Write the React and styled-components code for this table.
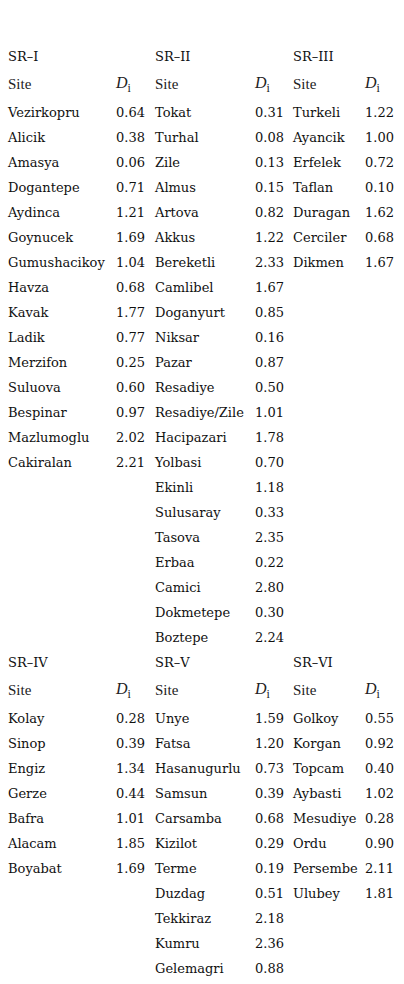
import React from 'react';
import styled, { createGlobalStyle } from 'styled-components';

const GlobalStyle = createGlobalStyle`
  html, body {
    margin: 0;
    padding: 0;
    background: #ffffff;
  }
  body {
    font-family: "DejaVu Serif", serif;
    color: #111;
  }
`;

const Page = styled.div`
  width: 404px;
  padding: 44px 0 0 0;
  box-sizing: border-box;
`;

const Block = styled.div`
  display: grid;
  grid-template-columns: 108px 39px 100px 38px 72px 39px;
  grid-template-rows: 25px 31px;
  grid-auto-rows: 25px;
  padding-left: 8px;
`;

const Cell = styled.div`
  display: flex;
  align-items: center;
  font-size: 13px;
  white-space: nowrap;
  grid-column: ${props => (props.span ? `span ${props.span}` : 'auto')};
`;

const HeadCell = styled(Cell)`
  font-family: "Liberation Serif", serif;
  font-size: 15px;
  color: #222;
`;

const Di = styled.span`
  font-family: "Liberation Serif", serif;
  font-style: italic;
  font-size: 16px;
  sub {
    font-style: normal;
    font-size: 12px;
    vertical-align: -4px;
  }
`;

const groups = [
  {
    titles: ['SR–I', 'SR–II', 'SR–III'],
    cols: [
      [
        ['Vezirkopru', '0.64'], ['Alicik', '0.38'], ['Amasya', '0.06'], ['Dogantepe', '0.71'],
        ['Aydinca', '1.21'], ['Goynucek', '1.69'], ['Gumushacikoy', '1.04'], ['Havza', '0.68'],
        ['Kavak', '1.77'], ['Ladik', '0.77'], ['Merzifon', '0.25'], ['Suluova', '0.60'],
        ['Bespinar', '0.97'], ['Mazlumoglu', '2.02'], ['Cakiralan', '2.21'],
      ],
      [
        ['Tokat', '0.31'], ['Turhal', '0.08'], ['Zile', '0.13'], ['Almus', '0.15'],
        ['Artova', '0.82'], ['Akkus', '1.22'], ['Bereketli', '2.33'], ['Camlibel', '1.67'],
        ['Doganyurt', '0.85'], ['Niksar', '0.16'], ['Pazar', '0.87'], ['Resadiye', '0.50'],
        ['Resadiye/Zile', '1.01'], ['Hacipazari', '1.78'], ['Yolbasi', '0.70'], ['Ekinli', '1.18'],
        ['Sulusaray', '0.33'], ['Tasova', '2.35'], ['Erbaa', '0.22'], ['Camici', '2.80'],
        ['Dokmetepe', '0.30'], ['Boztepe', '2.24'],
      ],
      [
        ['Turkeli', '1.22'], ['Ayancik', '1.00'], ['Erfelek', '0.72'], ['Taflan', '0.10'],
        ['Duragan', '1.62'], ['Cerciler', '0.68'], ['Dikmen', '1.67'],
      ],
    ],
  },
  {
    titles: ['SR–IV', 'SR–V', 'SR–VI'],
    cols: [
      [
        ['Kolay', '0.28'], ['Sinop', '0.39'], ['Engiz', '1.34'], ['Gerze', '0.44'],
        ['Bafra', '1.01'], ['Alacam', '1.85'], ['Boyabat', '1.69'],
      ],
      [
        ['Unye', '1.59'], ['Fatsa', '1.20'], ['Hasanugurlu', '0.73'], ['Samsun', '0.39'],
        ['Carsamba', '0.68'], ['Kizilot', '0.29'], ['Terme', '0.19'], ['Duzdag', '0.51'],
        ['Tekkiraz', '2.18'], ['Kumru', '2.36'], ['Gelemagri', '0.88'],
      ],
      [
        ['Golkoy', '0.55'], ['Korgan', '0.92'], ['Topcam', '0.40'], ['Aybasti', '1.02'],
        ['Mesudiye', '0.28'], ['Ordu', '0.90'], ['Persembe', '2.11'], ['Ulubey', '1.81'],
      ],
    ],
  },
];

function Group({ titles, cols }) {
  const rows = Math.max(...cols.map(c => c.length));
  const cells = [];
  for (let r = 0; r < rows; r++) {
    cols.forEach((col, ci) => {
      const item = col[r];
      cells.push(<Cell key={`s${r}-${ci}`}>{item ? item[0] : ''}</Cell>);
      cells.push(<Cell key={`v${r}-${ci}`}>{item ? item[1] : ''}</Cell>);
    });
  }
  return (
    <Block>
      {titles.map(t => (
        <Cell key={t} span={2}>{t}</Cell>
      ))}
      {titles.map(t => (
        <React.Fragment key={`h${t}`}>
          <HeadCell>Site</HeadCell>
          <HeadCell>
            <Di>D<sub>i</sub></Di>
          </HeadCell>
        </React.Fragment>
      ))}
      {cells}
    </Block>
  );
}

export default function App() {
  return (
    <Page>
      <GlobalStyle />
      {groups.map((g, i) => (
        <Group key={i} titles={g.titles} cols={g.cols} />
      ))}
    </Page>
  );
}
